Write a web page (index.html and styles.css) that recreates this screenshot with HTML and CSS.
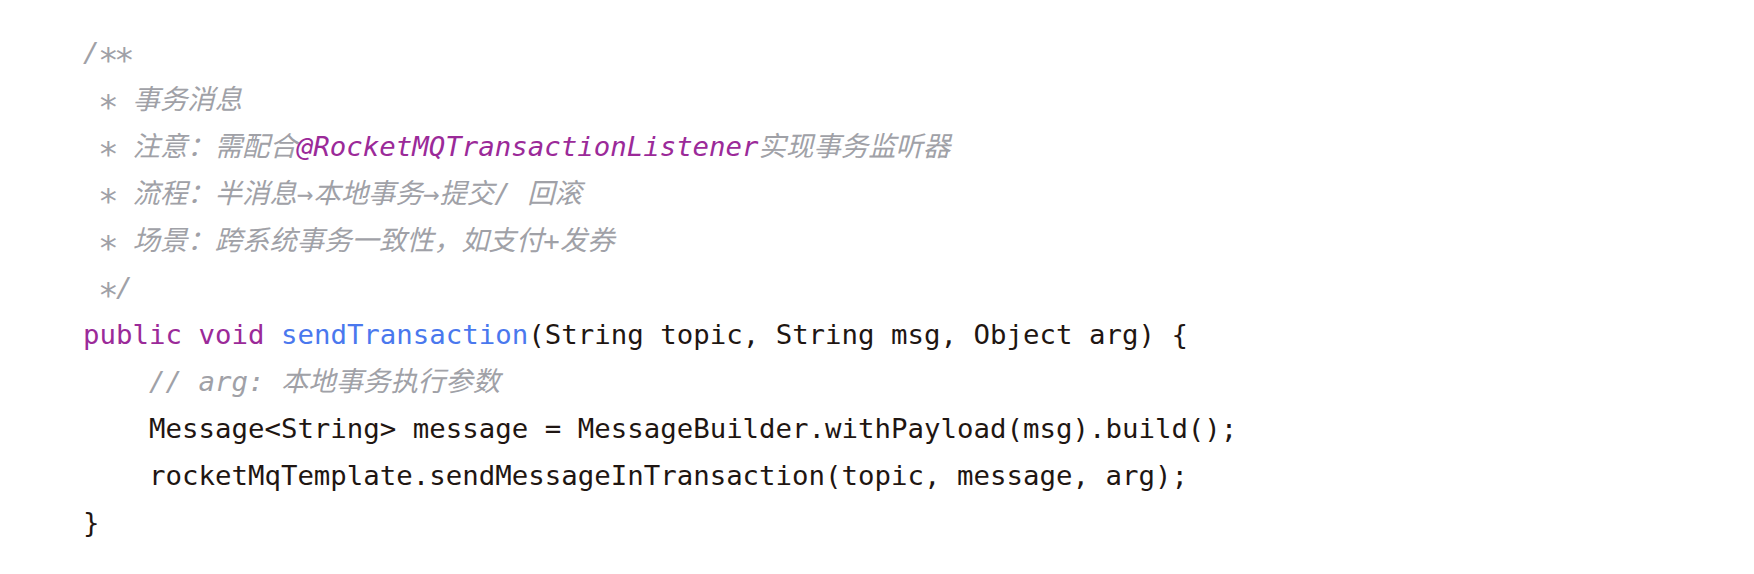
FILE: index.html
```html
<!DOCTYPE html>
<html lang="zh-CN">
<head>
<meta charset="utf-8">
<title>sendTransaction</title>
<link rel="stylesheet" href="styles.css">
</head>
<body>
<pre class="code"><code><span class="cm">/<span class="ast">*</span><span class="ast">*</span></span>
<span class="cm"> <span class="ast">*</span> 事务消息</span>
<span class="cm"> <span class="ast">*</span> 注意：需配合<span class="ann">@RocketMQTransactionListener</span>实现事务监听器</span>
<span class="cm"> <span class="ast">*</span> 流程：半消息→本地事务→提交/ 回滚</span>
<span class="cm"> <span class="ast">*</span> 场景：跨系统事务一致性，如支付+发券</span>
<span class="cm"> <span class="ast">*</span>/</span>
<span class="kw">public</span> <span class="kw">void</span> <span class="fn">sendTransaction</span>(String topic, String msg, Object arg) {
    <span class="cm">// arg: 本地事务执行参数</span>
    Message&lt;String&gt; message = MessageBuilder.withPayload(msg).build();
    rocketMqTemplate.sendMessageInTransaction(topic, message, arg);
}</code></pre>
</body>
</html>
```

FILE: styles.css
```css
html, body {
  margin: 0;
  padding: 0;
  background: #ffffff;
}

.code {
  margin: 0;
  padding: 29px 0 0 83px;
  font-family: "DejaVu Sans Mono", "Noto Sans CJK SC", monospace;
  font-size: 27.4px;
  line-height: 47px;
  color: #1f1612;
  white-space: pre;
}

.code code {
  font-family: inherit;
}

.cm {
  color: #a0a1a7;
  font-style: italic;
}

.ast {
  display: inline-block;
  font-style: normal;
  transform: translateY(0.27em) scale(1.25);
}

.ann {
  color: #9b2a99;
}

.kw {
  color: #9b2a99;
}

.fn {
  color: #4a78ee;
}
```
